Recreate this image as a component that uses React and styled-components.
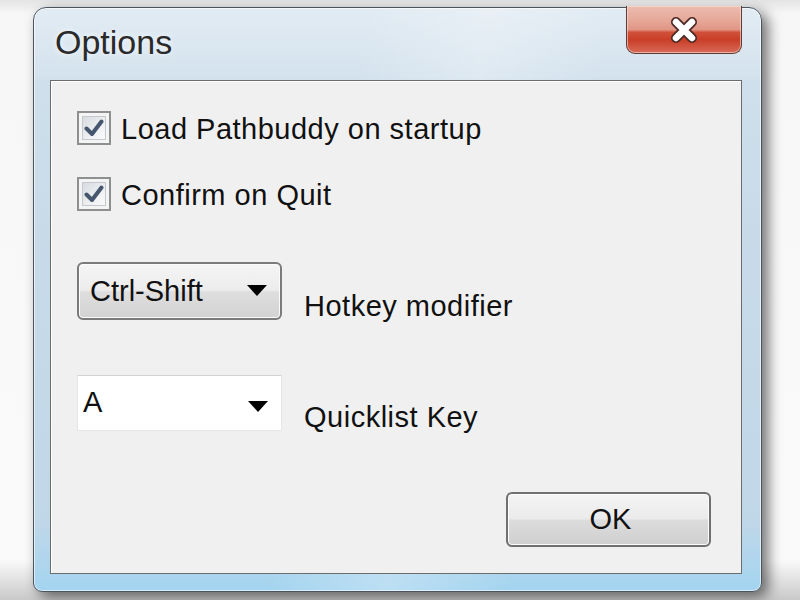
import React from "react";
import styled, { createGlobalStyle } from "styled-components";

const Global = createGlobalStyle`
  html, body { margin: 0; padding: 0; }
  body {
    width: 800px; height: 600px; overflow: hidden;
    background: #f6f6f6;
    font-family: "Liberation Sans", Arial, sans-serif;
  }
`;

const Page = styled.div`
  width: 800px;
  height: 600px;
  box-sizing: border-box;
  padding: 7px 0 0 33px;
  background: linear-gradient(180deg, #e4e4e4 0px, #f7f7f7 14px, #fafafa 560px, #c9c9c9 600px);
`;

const Window = styled.div`
  position: relative;
  width: 729px;
  height: 585px;
  box-sizing: border-box;
  border: 1.5px solid #4a5560;
  border-radius: 13px 13px 9px 9px;
  background:
    linear-gradient(180deg, rgba(255,255,255,0.35) 0px, rgba(255,255,255,0.1) 70px, rgba(255,255,255,0) 72px),
    linear-gradient(100deg, rgba(255,255,255,0) 40%, rgba(255,255,255,0.25) 55%, rgba(255,255,255,0) 70%),
    linear-gradient(180deg, #d2e1ed 0%, #c8dae8 40%, #c0d7e8 88%, #a3d4f0 100%);
  box-shadow: 6px 5px 14px rgba(0,0,0,0.55), 0 0 0 1px rgba(255,255,255,0.6) inset;
  display: flex;
  flex-direction: column;
  padding: 0 19px 17px 16px;
`;

const TitleBar = styled.div`
  height: 72px;
  display: flex;
  justify-content: space-between;
  align-items: flex-start;
  flex-shrink: 0;
`;

const Title = styled.div`
  margin: 14px 0 0 5px;
  font-size: 34px;
  line-height: 40px;
  color: #2a2a2a;
  text-shadow: 0 0 6px rgba(255,255,255,0.9);
`;

const CloseButton = styled.button`
  margin-top: -2px;
  width: 116px;
  height: 48px;
  box-sizing: border-box;
  border: 1.5px solid #5b3c36;
  border-top: none;
  border-radius: 0 0 9px 9px;
  background: linear-gradient(180deg,
    #ecbcb0 0%, #e6a898 30%, #e29685 50%, #d0503a 56%, #c93f28 72%, #d86a58 100%);
  box-shadow: inset 0 0 0 1px rgba(255,225,215,0.6);
  display: flex;
  align-items: center;
  justify-content: center;
  padding: 0;
`;

const Client = styled.div`
  flex: 1;
  box-sizing: border-box;
  border: 1.5px solid #6c6c6c;
  box-shadow: inset 1px 1px 0 #ffffff;
  background: #f0f0f0;
  padding: 30px 28px 26px 26px;
  display: flex;
  flex-direction: column;
`;

const CheckRow = styled.label`
  display: flex;
  align-items: center;
  gap: 10px;
  height: 34px;
  margin-bottom: ${(p) => p.$mb || 0}px;
`;

const Box = styled.span`
  width: 34px;
  height: 34px;
  box-sizing: border-box;
  border: 2px solid #8e8f8f;
  background: #f4f4f4;
  padding: 3px;
  display: flex;
`;

const BoxInner = styled.span`
  flex: 1;
  border: 1.5px solid #c5c8cc;
  background: linear-gradient(135deg, #d7dbe0 0%, #eef0f2 60%, #fbfbfb 100%);
  display: flex;
  align-items: center;
  justify-content: center;
`;

const Label = styled.span`
  font-size: 29px;
  letter-spacing: 0.5px;
  color: #111;
  line-height: 34px;
  padding-top: 2px;
`;

const ComboRow = styled.div`
  display: flex;
  align-items: flex-end;
  gap: 22px;
  margin-bottom: ${(p) => p.$mb || 0}px;
`;

const Combo = styled.div`
  width: 205px;
  height: ${(p) => (p.$button ? 58 : 56)}px;
  box-sizing: border-box;
  display: flex;
  align-items: center;
  justify-content: space-between;
  padding: 0 13px 0 ${(p) => (p.$button ? 11 : 5)}px;
  border-radius: ${(p) => (p.$button ? 6 : 0)}px;
  border: ${(p) => (p.$button ? "2px solid #7b7b7b" : "1px solid #e6e6e6")};
  border-top-color: ${(p) => (p.$button ? "#7b7b7b" : "#d2d2d2")};
  background: ${(p) =>
    p.$button
      ? "linear-gradient(180deg, #f5f5f5 0%, #ececec 48%, #dedede 52%, #d3d3d3 100%)"
      : "#ffffff"};
  box-shadow: ${(p) => (p.$button ? "inset 0 0 0 1px #fbfbfb" : "none")};
  font-size: 29px;
  color: #111;
`;

const ComboText = styled.span`
  line-height: 34px;
  margin-top: ${(p) => (p.$button ? 0 : -2)}px;
`;

const Arrow = styled.span`
  width: 0;
  height: 0;
  border-left: 10px solid transparent;
  border-right: 10px solid transparent;
  border-top: 11px solid #000;
  margin-top: ${(p) => (p.$button ? -2 : 6)}px;
`;

const RowLabel = styled(Label)`
  margin-bottom: -3px;
`;

const Footer = styled.div`
  margin-top: auto;
  display: flex;
  justify-content: flex-end;
  padding-right: 2px;
`;

const OkButton = styled.button`
  width: 205px;
  height: 55px;
  box-sizing: border-box;
  border: 2px solid #707070;
  border-radius: 6px;
  background: linear-gradient(180deg, #f4f4f4 0%, #ebebeb 48%, #dcdcdc 52%, #cfcfcf 100%);
  box-shadow: inset 0 0 0 1px #fcfcfc;
  font-family: "Liberation Sans", Arial, sans-serif;
  font-size: 29px;
  color: #111;
  padding: 0 0 0 4px;
`;

function Check() {
  return (
    <svg width="20" height="18" viewBox="0 0 20 18">
      <path d="M2.5 9.5 L8 15 L17.5 2.5" fill="none" stroke="#46566e" strokeWidth="4" strokeLinecap="round" strokeLinejoin="round" />
    </svg>
  );
}

function CloseX() {
  return (
    <svg width="30" height="28" viewBox="0 0 30 28">
      <path d="M7 6 L23 22 M23 6 L7 22" stroke="#4a2a25" strokeWidth="10" strokeLinecap="round" />
      <path d="M7 6 L23 22 M23 6 L7 22" stroke="#ffffff" strokeWidth="6.5" strokeLinecap="round" />
    </svg>
  );
}

export default function App() {
  return (
    <>
      <Global />
      <Page>
        <Window>
          <TitleBar>
            <Title>Options</Title>
            <CloseButton aria-label="Close">
              <CloseX />
            </CloseButton>
          </TitleBar>
          <Client>
            <CheckRow $mb={32}>
              <Box><BoxInner><Check /></BoxInner></Box>
              <Label>Load Pathbuddy on startup</Label>
            </CheckRow>
            <CheckRow $mb={51}>
              <Box><BoxInner><Check /></BoxInner></Box>
              <Label>Confirm on Quit</Label>
            </CheckRow>
            <ComboRow $mb={55}>
              <Combo $button>
                <ComboText $button>Ctrl-Shift</ComboText>
                <Arrow $button />
              </Combo>
              <RowLabel>Hotkey modifier</RowLabel>
            </ComboRow>
            <ComboRow>
              <Combo>
                <ComboText>A</ComboText>
                <Arrow />
              </Combo>
              <RowLabel>Quicklist Key</RowLabel>
            </ComboRow>
            <Footer>
              <OkButton>OK</OkButton>
            </Footer>
          </Client>
        </Window>
      </Page>
    </>
  );
}
